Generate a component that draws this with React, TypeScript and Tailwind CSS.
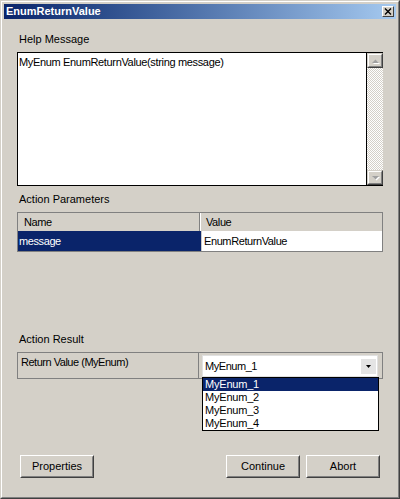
import React from "react";

function Btn3D({ label, w }: { label: string; w: string }) {
  return (
    <div
      className={`${w} h-[23px] border border-t-white border-l-white border-r-[#404040] border-b-[#404040]`}
    >
      <div className="w-full h-full border border-t-[#d4d0c8] border-l-[#d4d0c8] border-r-[#808080] border-b-[#808080] flex items-center justify-center text-[11px] leading-[13px] text-black">
        {label}
      </div>
    </div>
  );
}

function ScrollBtn({ up }: { up: boolean }) {
  return (
    <div className="w-[16px] h-[15px] border border-t-[#d4d0c8] border-l-[#d4d0c8] border-r-[#404040] border-b-[#404040] bg-[#d4d0c8]">
      <div className="w-full h-full border border-t-white border-l-white border-r-[#808080] border-b-[#808080] flex items-center justify-center">
        <svg width="9" height="6" viewBox="0 0 9 6">
          {up ? (
            <>
              <polygon points="1,5 8,5 4.5,1.5" fill="#ffffff" transform="translate(1,1)" />
              <polygon points="1,5 8,5 4.5,1.5" fill="#a0a0a0" />
            </>
          ) : (
            <>
              <polygon points="1,1 8,1 4.5,4.5" fill="#ffffff" transform="translate(1,1)" />
              <polygon points="1,1 8,1 4.5,4.5" fill="#a0a0a0" />
            </>
          )}
        </svg>
      </div>
    </div>
  );
}

export default function App() {
  return (
    <div className="w-[400px] h-[499px] border border-t-[#d4d0c8] border-l-[#d4d0c8] border-r-[#404040] border-b-[#404040] font-['Liberation_Sans',Arial,sans-serif] text-black">
      <div className="w-full h-full border border-t-white border-l-white border-r-[#808080] border-b-[#808080] bg-[#d4d0c8] p-[2px] flex flex-col">
        {/* Title bar */}
        <div className="h-[15px] w-[392px] bg-gradient-to-r from-[#0a246a] to-[#a6caf0] flex items-center justify-between pl-[2px] pr-[2px]">
          <span className="text-white font-bold text-[11px] leading-[13px]">EnumReturnValue</span>
          <div className="w-[12px] h-[11px] border border-t-white border-l-white border-r-[#404040] border-b-[#404040] bg-[#d4d0c8] flex items-center justify-center">
            <svg width="8" height="7" viewBox="0 0 8 7">
              <path d="M1 0.5 L7 6.5 M7 0.5 L1 6.5" stroke="#000" strokeWidth="1.4" />
            </svg>
          </div>
        </div>

        {/* Body */}
        <div className="px-[13px] flex flex-col">
          <div className="mt-[14px] h-[13px] leading-[13px] text-[11px] pl-[2px]">Help Message</div>

          {/* Text box */}
          <div className="mt-[6px] h-[134px] w-[366px] flex border-t border-l border-b border-black">
            <div className="flex-1 bg-white border-r border-black pl-[1px] pt-[3px] text-[11px] leading-[13px] tracking-[-0.34px]">
              MyEnum EnumReturnValue(string message)
            </div>
            <div className="w-[16px] flex flex-col">
              <ScrollBtn up={true} />
              <div className="flex-1 bg-[repeating-conic-gradient(#d4d0c8_0_25%,#ffffff_0_50%)] bg-[length:2px_2px]" />
              <ScrollBtn up={false} />
            </div>
          </div>

          <div className="mt-[7px] h-[13px] leading-[13px] text-[11px] pl-[2px]">Action Parameters</div>

          {/* Grid */}
          <div className="mt-[6px] w-[366px] border border-[#808080] flex flex-col text-[11px] leading-[13px] tracking-[-0.4px]">
            <div className="h-[18px] flex bg-[#d4d0c8]">
              <div className="w-[182px] border-r border-[#808080] pl-[6px] flex items-center">Name</div>
              <div className="flex-1 border-l border-white pl-[5px] flex items-center">Value</div>
            </div>
            <div className="h-[20px] flex">
              <div className="w-[183px] bg-[#0a246a] text-white pl-[1px] flex items-center">message</div>
              <div className="w-[1px] bg-[#c8c8c8]" />
              <div className="flex-1 bg-white pl-[2px] flex items-center">EnumReturnValue</div>
            </div>
          </div>

          <div className="mt-[81px] h-[13px] leading-[13px] text-[11px] pl-[2px]">Action Result</div>

          {/* Result panel */}
          <div className="mt-[6px] w-[366px] h-[27px] border border-[#808080] flex text-[11px] leading-[13px]">
            <div className="w-[181px] border-r border-[#808080] pl-[3px] pt-[3px] tracking-[-0.48px]">
              Return Value (MyEnum)
            </div>
            <div className="flex-1 relative pl-[3px] pt-[2px]">
              <div className="w-[176px] h-[22px] bg-white border border-[#e0e0e0] flex items-center justify-between pl-[2px] pr-[1px] tracking-[-0.45px]">
                <span className="mt-[1px]">MyEnum_1</span>
                <div className="w-[15px] h-[15px] bg-[#e4e4e4] flex items-center justify-center">
                  <svg width="5" height="3" viewBox="0 0 5 3">
                    <polygon points="0,0 5,0 2.5,3" fill="#000" />
                  </svg>
                </div>
              </div>
              {/* Dropdown list overlay */}
              <div className="absolute left-[3px] top-[24px] w-[177px] border border-black bg-white flex flex-col z-10 tracking-[-0.2px]">
                <div className="h-[13px] bg-[#0a246a] text-white pl-[2px] leading-[13px]">MyEnum_1</div>
                <div className="h-[13px] pl-[2px] leading-[13px]">MyEnum_2</div>
                <div className="h-[13px] pl-[2px] leading-[13px]">MyEnum_3</div>
                <div className="h-[13px] pl-[2px] leading-[13px]">MyEnum_4</div>
              </div>
            </div>
          </div>

          {/* Buttons */}
          <div className="mt-[76px] flex w-[366px]">
            <div className="ml-[3px]">
              <Btn3D label="Properties" w="w-[74px]" />
            </div>
            <div className="ml-auto flex gap-[6px] mr-[3px]">
              <Btn3D label="Continue" w="w-[74px]" />
              <Btn3D label="Abort" w="w-[74px]" />
            </div>
          </div>
        </div>
      </div>
    </div>
  );
}
